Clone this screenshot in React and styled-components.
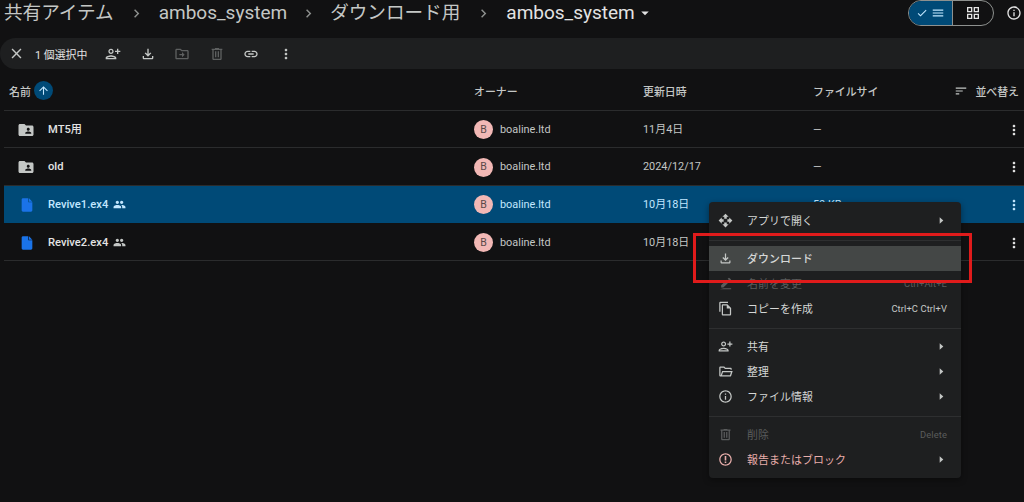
import React from "react";
import styled, { createGlobalStyle } from "styled-components";

const Global = createGlobalStyle`
  html, body { margin: 0; padding: 0; background: #111112; overflow: hidden; }
  body { font-family: Roboto, "Noto Sans CJK JP", sans-serif; color: #e3e3e3; }
  * { box-sizing: border-box; }
`;

const P = {
  close: "M19 6.41L17.59 5 12 10.59 6.41 5 5 6.41 10.59 12 5 17.59 6.41 19 12 13.41 17.59 19 19 17.59 13.41 12z",
  personAdd: "M9 12c2.21 0 4-1.79 4-4s-1.79-4-4-4-4 1.79-4 4 1.79 4 4 4zm0-6c1.1 0 2 .9 2 2s-.9 2-2 2-2-.9-2-2 .9-2 2-2zm0 8c-2.67 0-8 1.34-8 4v2h16v-2c0-2.66-5.33-4-8-4zm-6 4c.22-.72 3.31-2 6-2 2.7 0 5.8 1.29 6 2H3zm17-6V9h3V7h-3V4h-2v3h-3v2h3v3h2z",
  download: "M18 15v3H6v-3H4v3c0 1.1.9 2 2 2h12c1.1 0 2-.9 2-2v-3h-2zm-1-4l-1.41-1.41L13 12.17V4h-2v8.17L8.41 9.59 7 11l5 5 5-5z",
  move: "M20 6h-8l-2-2H4c-1.1 0-2 .9-2 2v12c0 1.1.9 2 2 2h16c1.1 0 2-.9 2-2V8c0-1.1-.9-2-2-2zm0 12H4V6h5.17l2 2H20v10zm-8-1l4-4-4-4v3H8v2h4v3z",
  trash: "M15 4V3H9v1H4v2h1v13c0 1.1.9 2 2 2h10c1.1 0 2-.9 2-2V6h1V4h-5zm2 15H7V6h10v13zM9 8h2v9H9zm4 0h2v9h-2z",
  link: "M17 7h-4v2h4c1.65 0 3 1.35 3 3s-1.35 3-3 3h-4v2h4c2.76 0 5-2.24 5-5s-2.24-5-5-5zm-6 8H7c-1.65 0-3-1.35-3-3s1.35-3 3-3h4V7H7c-2.76 0-5 2.24-5 5s2.24 5 5 5h4v-2zm-3-4h8v2H8z",
  more: "M12 8c1.1 0 2-.9 2-2s-.9-2-2-2-2 .9-2 2 .9 2 2 2zm0 2c-1.1 0-2 .9-2 2s.9 2 2 2 2-.9 2-2-.9-2-2-2zm0 6c-1.1 0-2 .9-2 2s.9 2 2 2 2-.9 2-2-.9-2-2-2z",
  folderShared: "M20 6h-8l-2-2H4c-1.1 0-2 .9-2 2v12c0 1.1.9 2 2 2h16c1.1 0 2-.9 2-2V8c0-1.1-.9-2-2-2zm-5 3c1.1 0 2 .9 2 2s-.9 2-2 2-2-.9-2-2 .9-2 2-2zm4 8h-8v-1c0-1.33 2.67-2 4-2s4 .67 4 2v1z",
  file: "M6 2c-1.1 0-2 .9-2 2v16c0 1.1.9 2 2 2h12c1.1 0 2-.9 2-2V8h-6V2H6zm9 0v5h5l-5-5z",
  people: "M16 11c1.66 0 2.99-1.34 2.99-3S17.66 5 16 5c-1.66 0-3 1.34-3 3s1.34 3 3 3zm-8 0c1.66 0 2.99-1.34 2.99-3S9.66 5 8 5C6.34 5 5 6.34 5 8s1.34 3 3 3zm0 2c-2.33 0-7 1.17-7 3.5V19h14v-2.5c0-2.33-4.67-3.5-7-3.5zm8 0c-.29 0-.62.02-.97.05 1.16.84 1.97 1.97 1.97 3.45V19h6v-2.5c0-2.33-4.67-3.5-7-3.5z",
  check: "M9 16.17L4.83 12l-1.42 1.41L9 19 21 7l-1.41-1.41z",
  list: "M3 18h18v-2H3v2zm0-5h18v-2H3v2zm0-7v2h18V6H3z",
  grid: "M3 3h8v8H3V3zm2 2v4h4V5H5zm8-2h8v8h-8V3zm2 2v4h4V5h-4zM3 13h8v8H3v-8zm2 2v4h4v-4H5zm8-2h8v8h-8v-8zm2 2v4h4v-4h-4z",
  info: "M11 7h2v2h-2zm0 4h2v6h-2zm1-9C6.48 2 2 6.48 2 12s4.48 10 10 10 10-4.48 10-10S17.52 2 12 2zm0 18c-4.41 0-8-3.59-8-8s3.59-8 8-8 8 3.59 8 8-3.59 8-8 8z",
  sort: "M3 18h6v-2H3v2zM3 6v2h18V6H3zm0 7h12v-2H3v2z",
  up: "M4 12l1.41 1.41L11 7.83V20h2V7.83l5.58 5.59L20 12l-8-8-8 8z",
  open: "M10 9h4V6h3l-5-5-5 5h3v3zm-1 1H6V7l-5 5 5 5v-3h3v-4zm14 2l-5-5v3h-3v4h3v3l5-5zm-9 3h-4v3H7l5 5 5-5h-3v-3z",
  edit: "M3 21h18v-1.5H9.5L3 21zM14.06 5.94l3.54 3.54L8.54 18.5H5v-3.54l9.06-9.02zm1.41-1.41l1.42-1.42a1 1 0 0 1 1.41 0l2.13 2.13a1 1 0 0 1 0 1.41l-1.42 1.42-3.54-3.54z",
  copy: "M16 1H4c-1.1 0-2 .9-2 2v14h2V3h12V1zm-1 4H8c-1.1 0-1.99.9-1.99 2L6 21c0 1.1.89 2 1.99 2H19c1.1 0 2-.9 2-2V11l-6-6zM8 21V7h6v5h5v9H8z",
  folderOpen: "M20 6h-8l-2-2H4c-1.1 0-2 .9-2 2v12c0 1.1.9 2 2 2h15.2c.9 0 1.6-.6 1.9-1.4L23.5 11H6.6L4.3 18H4V6h5.2l2 2H20v1h2V8c0-1.1-.9-2-2-2zM8 13h12.7l-1.6 5H6.4L8 13z",
  report: "M10.75 6.5h2.5v7h-2.5zm0 8.5h2.5v2.5h-2.5zM12 2C6.48 2 2 6.48 2 12s4.48 10 10 10 10-4.48 10-10S17.52 2 12 2zm0 18c-4.42 0-8-3.58-8-8s3.58-8 8-8 8 3.58 8 8-3.58 8-8 8z",
  chevron: "M8.59 16.59L13.17 12 8.59 7.41 10 6l6 6-6 6z",
  caret: "M7 10l5 5 5-5z",
  tri: "M8 5l8 7-8 7z",
};

const Svg = styled.svg`
  flex: none;
  display: block;
  width: ${(p) => p.$size || 16}px;
  height: ${(p) => p.$size || 16}px;
  fill: ${(p) => p.$color || "#c4c7c5"};
`;
const Icon = ({ d, size, color }) => (
  <Svg viewBox="0 0 24 24" $size={size} $color={color}><path d={d} /></Svg>
);

const Page = styled.div`
  position: relative;
  width: 1024px;
  height: 502px;
  overflow: hidden;
  background: #111112;
`;

const TopBar = styled.div`
  height: 38px;
  padding: 0 2px 12px 4px;
  display: flex;
  align-items: center;
  justify-content: space-between;
`;
const Crumbs = styled.div`
  display: flex;
  align-items: center;
`;
const Crumb = styled.span`
  font-size: ${(p) => (p.$latin ? 19 : 18.6)}px;
  line-height: 26px;
  color: ${(p) => (p.$current ? "#e3e3e3" : "#c4c7c5")};
`;
const CrumbSep = styled.span`
  display: flex;
  margin: 0 ${(p) => p.$gap}px;
`;
const CaretWrap = styled.span`
  display: flex;
  margin-left: 1px;
`;
const ViewTools = styled.div`
  display: flex;
  align-items: center;
  gap: 12px;
`;
const Toggle = styled.div`
  display: flex;
  height: 26px;
  width: 86px;
  border: 1px solid #8e918f;
  border-radius: 13px;
  overflow: hidden;
`;
const ToggleHalf = styled.div`
  flex: ${(p) => (p.$on ? "0 0 44px" : "1")};
  background: ${(p) => (p.$on ? "#004a77" : "transparent")};
  border-right: ${(p) => (p.$on ? "1px solid #8e918f" : "none")};
  display: flex;
  align-items: center;
  justify-content: center;
  gap: 3px;
`;

const ActionBar = styled.div`
  height: 31px;
  background: #1e1f20;
  border-radius: 16px 0 0 16px;
  display: flex;
  align-items: center;
  padding-left: 8px;
`;
const Selected = styled.span`
  font-size: 10.9px;
  color: #e3e3e3;
  margin: 0 17px 0 10px;
  width: 53px;
  white-space: nowrap;
`;
const ActionIcons = styled.div`
  display: flex;
  align-items: center;
  gap: 18.6px;
`;

const Table = styled.div`
  margin-left: 4px;
`;
const Columns = "470px 169px 170px 1fr";
const HeadRow = styled.div`
  display: grid;
  grid-template-columns: ${Columns};
  height: 41.5px;
  padding-top: 3px;
  align-items: center;
  border-bottom: 1px solid #2b2c2d;
  font-size: 10.9px;
  font-weight: 500;
  color: #c4c7c5;
`;
const NameHead = styled.div`
  display: flex;
  align-items: center;
  gap: 3px;
  padding-left: 5px;
`;
const SortBadge = styled.span`
  width: 19px;
  height: 19px;
  border-radius: 50%;
  background: #004a77;
  display: flex;
  align-items: center;
  justify-content: center;
`;
const SizeHead = styled.div`
  display: flex;
  align-items: center;
  justify-content: space-between;
  padding-right: 5px;
  white-space: nowrap;
`;
const SortControl = styled.span`
  display: flex;
  align-items: center;
  gap: 7px;
`;
const Row = styled.div`
  display: grid;
  grid-template-columns: ${Columns};
  height: 37.6px;
  padding-top: 2px;
  align-items: center;
  border-bottom: 1px solid ${(p) => (p.$selected ? "#004a77" : "#2b2c2d")};
  background: ${(p) => (p.$selected ? "#004a77" : "transparent")};
  color: ${(p) => (p.$selected ? "#c2e7ff" : "#c4c7c5")};
  font-size: 10.9px;
  line-height: 14px;
`;
const NameCell = styled.div`
  display: flex;
  align-items: center;
  padding-left: ${(p) => p.$pad}px;
`;
const FileName = styled.span`
  margin-left: ${(p) => p.$gap}px;
  color: ${(p) => (p.$selected ? "#c2e7ff" : "#e3e3e3")};
  font-size: 11.2px;
  font-weight: 500;
`;
const SharedMark = styled.span`
  display: flex;
  margin-left: 5px;
`;
const OwnerCell = styled.div`
  display: flex;
  align-items: center;
  gap: 7px;
`;
const Avatar = styled.span`
  width: 19px;
  height: 19px;
  border-radius: 50%;
  background: #f2b8b5;
  color: #5a4a49;
  font-size: 10.5px;
  display: flex;
  align-items: center;
  justify-content: center;
`;
const DateCell = styled.div`
  height: 14px;
  display: flex;
  align-items: center;
`;
const LastCell = styled.div`
  display: flex;
  align-items: center;
  justify-content: space-between;
  padding-right: 2px;
`;

const Menu = styled.div`
  position: absolute;
  left: 709px;
  top: 202px;
  width: 252px;
  height: 276px;
  padding-top: 6px;
  background: #1e1f20;
  border-radius: 4px;
  box-shadow: 0 2px 6px rgba(0, 0, 0, 0.4);
`;
const MenuItem = styled.div`
  height: 25px;
  display: flex;
  align-items: center;
  padding: 0 14px 1px 9px;
  font-size: 10.9px;
  letter-spacing: 0.1px;
  background: ${(p) => (p.$active ? "#444746" : "transparent")};
  color: ${(p) =>
    p.$disabled ? "#5a5c5c" : p.$danger ? "#e8aeab" : "#d5d7d6"};
`;
const MenuIcon = styled.span`
  width: 29px;
  flex: none;
  display: flex;
`;
const MenuLabel = styled.span`
  flex: 1;
  font-weight: ${(p) => (p.$active ? 500 : 400)};
`;
const Shortcut = styled.span`
  font-size: 9.4px;
  color: ${(p) => (p.$disabled ? "#5a5c5c" : "#c4c7c5")};
`;
const Divider = styled.div`
  height: 1px;
  background: #2e2f30;
  margin: 7px 0 5px;
`;
const Highlight = styled.div`
  position: absolute;
  left: 693px;
  top: 233px;
  width: 279px;
  height: 50px;
  border: 3px solid #e01b1b;
`;

const rows = [
  { name: "MT5用", kind: "folder", date: "11月4日", size: "—" },
  { name: "old", kind: "folder", date: "2024/12/17", size: "—" },
  { name: "Revive1.ex4", kind: "file", date: "10月18日", size: "50 KB", selected: true, shared: true },
  { name: "Revive2.ex4", kind: "file", date: "10月18日", size: "50 KB", shared: true },
];

const items = [
  { d: P.open, label: "アプリで開く", sub: true },
  { divider: true },
  { d: P.download, label: "ダウンロード", active: true },
  { d: P.edit, label: "名前を変更", hint: "Ctrl+Alt+E", disabled: true },
  { d: P.copy, label: "コピーを作成", hint: "Ctrl+C Ctrl+V" },
  { divider: true },
  { d: P.personAdd, label: "共有", sub: true },
  { d: P.folderOpen, label: "整理", sub: true },
  { d: P.info, label: "ファイル情報", sub: true },
  { divider: true },
  { d: P.trash, label: "削除", hint: "Delete", disabled: true },
  { d: P.report, label: "報告またはブロック", sub: true, danger: true },
];

export default function App() {
  return (
    <Page>
      <Global />
      <TopBar>
        <Crumbs>
          <Crumb>共有アイテム</Crumb>
          <CrumbSep $gap={14}><Icon d={P.chevron} size={17} color="#8e918f" /></CrumbSep>
          <Crumb $latin>ambos_system</Crumb>
          <CrumbSep $gap={13}><Icon d={P.chevron} size={17} color="#8e918f" /></CrumbSep>
          <Crumb>ダウンロード用</Crumb>
          <CrumbSep $gap={14.5}><Icon d={P.chevron} size={17} color="#8e918f" /></CrumbSep>
          <Crumb $latin $current>ambos_system</Crumb>
          <CaretWrap><Icon d={P.caret} size={18} color="#e3e3e3" /></CaretWrap>
        </Crumbs>
        <ViewTools>
          <Toggle>
            <ToggleHalf $on>
              <Icon d={P.check} size={12} color="#c2e7ff" />
              <Icon d={P.list} size={14} color="#c2e7ff" />
            </ToggleHalf>
            <ToggleHalf><Icon d={P.grid} size={16} color="#e3e3e3" /></ToggleHalf>
          </Toggle>
          <Icon d={P.info} size={16} color="#e3e3e3" />
        </ViewTools>
      </TopBar>

      <ActionBar>
        <Icon d={P.close} size={17} color="#c4c7c5" />
        <Selected>1 個選択中</Selected>
        <ActionIcons>
          <Icon d={P.personAdd} size={16} color="#c4c7c5" />
          <Icon d={P.download} size={16} color="#c4c7c5" />
          <Icon d={P.move} size={16} color="#5e6060" />
          <Icon d={P.trash} size={16} color="#5e6060" />
          <Icon d={P.link} size={16} color="#c4c7c5" />
          <Icon d={P.more} size={16} color="#c4c7c5" />
        </ActionIcons>
      </ActionBar>

      <Table>
        <HeadRow>
          <NameHead>
            名前
            <SortBadge><Icon d={P.up} size={13} color="#c2e7ff" /></SortBadge>
          </NameHead>
          <div>オーナー</div>
          <div>更新日時</div>
          <SizeHead>
            <span>ファイルサイ</span>
            <SortControl>
              <Icon d={P.sort} size={14} color="#c4c7c5" />
              並べ替え
            </SortControl>
          </SizeHead>
        </HeadRow>
        {rows.map((r) => (
          <Row key={r.name} $selected={r.selected}>
            <NameCell $pad={r.kind === "folder" ? 13 : 15}>
              {r.kind === "folder" ? (
                <Icon d={P.folderShared} size={18} color="#c4c7c5" />
              ) : (
                <Icon d={P.file} size={16} color="#1a73e8" />
              )}
              <FileName $selected={r.selected} $gap={13}>{r.name}</FileName>
              {r.shared && (
                <SharedMark><Icon d={P.people} size={13} color={r.selected ? "#c2e7ff" : "#c4c7c5"} /></SharedMark>
              )}
            </NameCell>
            <OwnerCell>
              <Avatar>B</Avatar>
              boaline.ltd
            </OwnerCell>
            <DateCell>{r.date}</DateCell>
            <LastCell>
              <span>{r.size}</span>
              <Icon d={P.more} size={16} color={r.selected ? "#c2e7ff" : "#e3e3e3"} />
            </LastCell>
          </Row>
        ))}
      </Table>

      <Menu>
        {items.map((it, i) =>
          it.divider ? (
            <Divider key={i} />
          ) : (
            <MenuItem key={i} $active={it.active} $disabled={it.disabled} $danger={it.danger}>
              <MenuIcon>
                <Icon
                  d={it.d}
                  size={15}
                  color={it.disabled ? "#5a5c5c" : it.danger ? "#e8aeab" : "#c4c7c5"}
                />
              </MenuIcon>
              <MenuLabel $active={it.active}>{it.label}</MenuLabel>
              {it.hint && <Shortcut $disabled={it.disabled}>{it.hint}</Shortcut>}
              {it.sub && <Icon d={P.tri} size={11} color="#c4c7c5" />}
            </MenuItem>
          )
        )}
      </Menu>
      <Highlight />
    </Page>
  );
}
